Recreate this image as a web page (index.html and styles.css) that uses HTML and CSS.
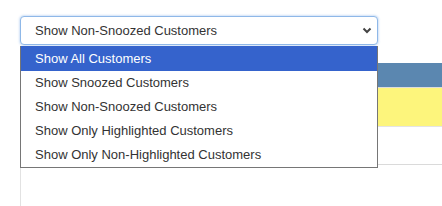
FILE: index.html
```html
<!DOCTYPE html>
<html>
<head>
<meta charset="utf-8">
<link rel="stylesheet" href="styles.css">
</head>
<body>
<div class="page">
  <div class="select-wrap">
    <div class="select">
      <span class="select-text">Show Non-Snoozed Customers</span>
      <svg class="chevron" width="10" height="7" viewBox="0 0 10 7"><path d="M1.5 1.5 L5 5 L8.5 1.5" fill="none" stroke="#444" stroke-width="2"/></svg>
    </div>
    <ul class="options">
      <li class="option selected">Show All Customers</li>
      <li class="option">Show Snoozed Customers</li>
      <li class="option">Show Non-Snoozed Customers</li>
      <li class="option">Show Only Highlighted Customers</li>
      <li class="option">Show Only Non-Highlighted Customers</li>
    </ul>
  </div>
  <div class="table">
    <div class="row head"></div>
    <div class="row hl"></div>
    <div class="row plain"></div>
    <div class="rest"></div>
  </div>
</div>
</body>
</html>
```
FILE: styles.css
```css
html, body { margin: 0; padding: 0; background: #fff; }
body { font-family: "Liberation Sans", Arial, sans-serif; font-size: 13px; color: #333; }
.page { padding: 16px 0 0 20px; }
.select-wrap { position: relative; width: 358px; }
.select {
  box-sizing: border-box;
  height: 29px;
  border: 1px solid #8fb8e8;
  border-radius: 4px;
  box-shadow: 0 0 2px 1px rgba(120, 170, 230, 0.35);
  display: flex;
  align-items: center;
  justify-content: space-between;
  padding: 0 5px 0 14px;
  background: #fff;
}
.select-text { color: #333; }
.chevron { display: block; }
.options {
  position: absolute;
  top: 30px;
  left: 0;
  width: 358px;
  box-sizing: border-box;
  margin: 0;
  padding: 0;
  list-style: none;
  border: 1px solid #767676;
  border-top: none;
  background: #fff;
  z-index: 2;
}
.option {
  height: 24px;
  line-height: 24px;
  padding-left: 14px;
  color: #333;
}
.option.selected { background: #3563cc; color: #fff; height: 25px; line-height: 25px; }
.table { margin-top: 18px; border-left: 1px solid #e2e2e2; }
.row { width: 100%; }
.head { height: 24px; background: #5b87b0; border-bottom: 1px solid #dcdcdc; }
.hl { height: 38px; background: #fdf57c; border-bottom: 1px solid #e4e4e4; }
.plain { height: 37px; background: #fff; border-bottom: 1px solid #dadada; }
.rest { height: 45px; }
```
